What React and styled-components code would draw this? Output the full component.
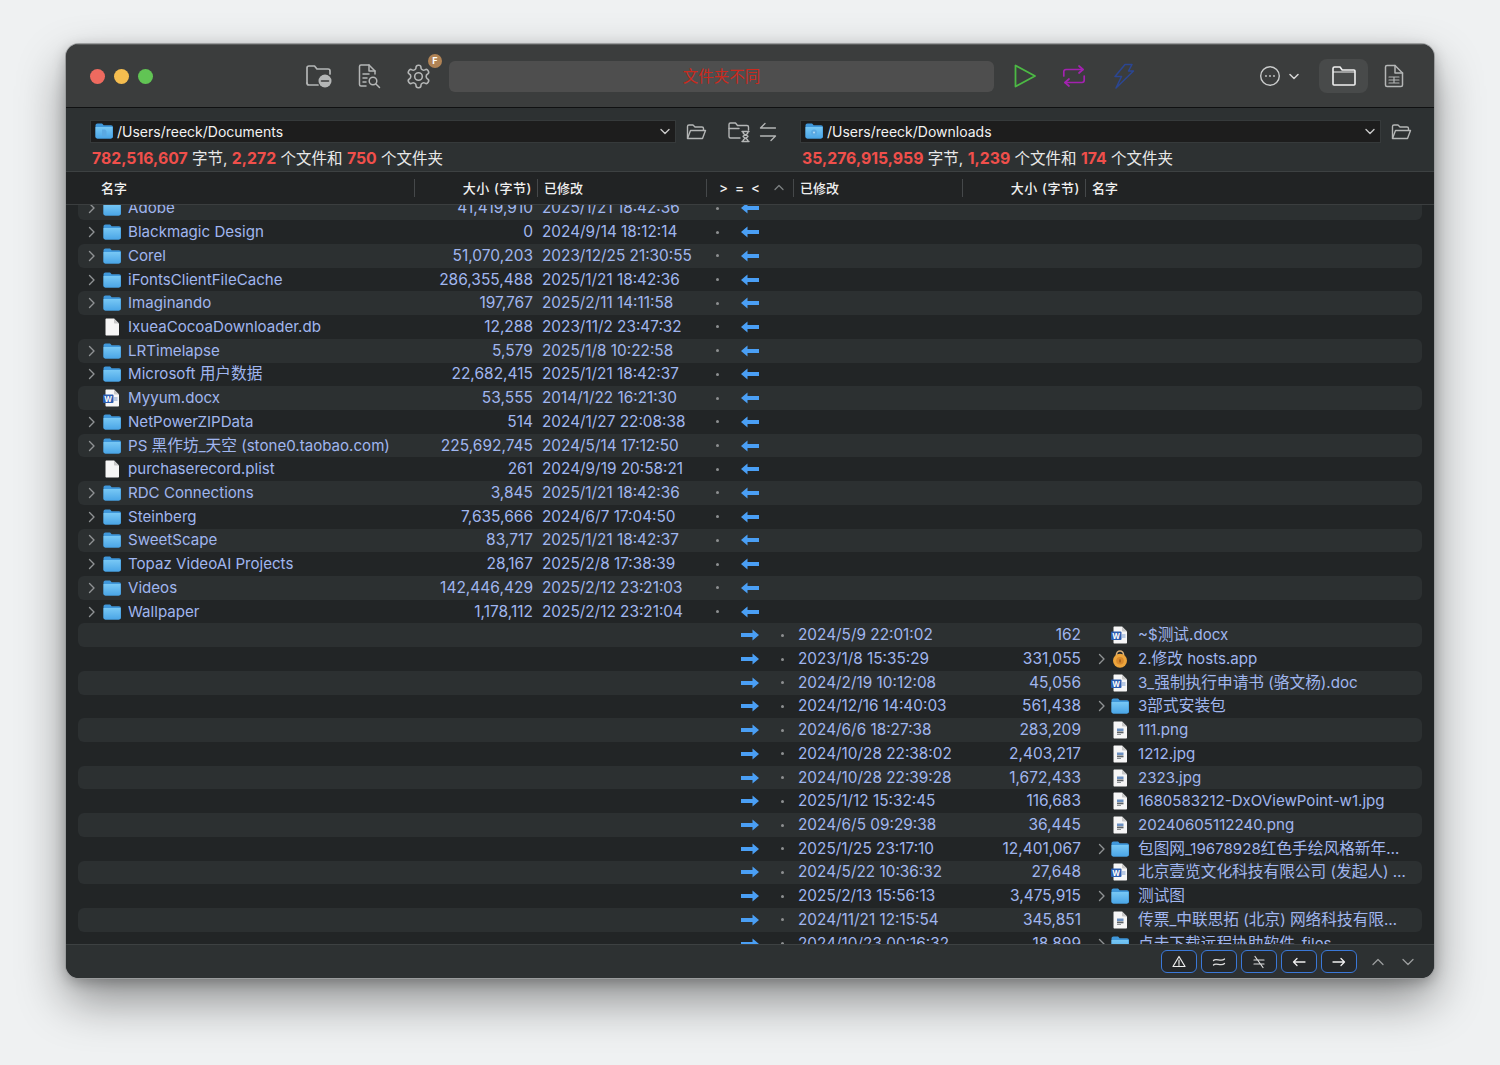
import React from "react";
import styled, { createGlobalStyle } from "styled-components";

const FONT = `Inter, "Noto Sans CJK SC", sans-serif`;

const Global = createGlobalStyle`
  html, body { margin: 0; padding: 0; background: #eff1f2; }
  * { box-sizing: border-box; }
`;

const leftRows = [
  ["Adobe", "41,419,910", "2025/1/21 18:42:36", "folder"],
  ["Blackmagic Design", "0", "2024/9/14 18:12:14", "folder"],
  ["Corel", "51,070,203", "2023/12/25 21:30:55", "folder"],
  ["iFontsClientFileCache", "286,355,488", "2025/1/21 18:42:36", "folder"],
  ["Imaginando", "197,767", "2025/2/11 14:11:58", "folder"],
  ["IxueaCocoaDownloader.db", "12,288", "2023/11/2 23:47:32", "file"],
  ["LRTimelapse", "5,579", "2025/1/8 10:22:58", "folder"],
  ["Microsoft 用户数据", "22,682,415", "2025/1/21 18:42:37", "folder"],
  ["Myyum.docx", "53,555", "2014/1/22 16:21:30", "word"],
  ["NetPowerZIPData", "514", "2024/1/27 22:08:38", "folder"],
  ["PS 黑作坊_天空 (stone0.taobao.com)", "225,692,745", "2024/5/14 17:12:50", "folder"],
  ["purchaserecord.plist", "261", "2024/9/19 20:58:21", "file"],
  ["RDC Connections", "3,845", "2025/1/21 18:42:36", "folder"],
  ["Steinberg", "7,635,666", "2024/6/7 17:04:50", "folder"],
  ["SweetScape", "83,717", "2025/1/21 18:42:37", "folder"],
  ["Topaz VideoAI Projects", "28,167", "2025/2/8 17:38:39", "folder"],
  ["Videos", "142,446,429", "2025/2/12 23:21:03", "folder"],
  ["Wallpaper", "1,178,112", "2025/2/12 23:21:04", "folder"],
];

const rightRows = [
  ["~$测试.docx", "162", "2024/5/9 22:01:02", "word"],
  ["2.修改 hosts.app", "331,055", "2023/1/8 15:35:29", "app"],
  ["3_强制执行申请书 (骆文杨).doc", "45,056", "2024/2/19 10:12:08", "word"],
  ["3部式安装包", "561,438", "2024/12/16 14:40:03", "folder"],
  ["111.png", "283,209", "2024/6/6 18:27:38", "image"],
  ["1212.jpg", "2,403,217", "2024/10/28 22:38:02", "image"],
  ["2323.jpg", "1,672,433", "2024/10/28 22:39:28", "image"],
  ["1680583212-DxOViewPoint-w1.jpg", "116,683", "2025/1/12 15:32:45", "image"],
  ["20240605112240.png", "36,445", "2024/6/5 09:29:38", "image"],
  ["包图网_19678928红色手绘风格新年…", "12,401,067", "2025/1/25 23:17:10", "folder"],
  ["北京壹览文化科技有限公司 (发起人) …", "27,648", "2024/5/22 10:36:32", "word"],
  ["测试图", "3,475,915", "2025/2/13 15:56:13", "folder"],
  ["传票_中联思拓 (北京) 网络科技有限…", "345,851", "2024/11/21 12:15:54", "image"],
  ["点击下载远程协助软件_files", "18,899", "2024/10/23 00:16:32", "folder"],
];

const Page = styled.div`
  width: 1500px;
  height: 1065px;
  padding: 44px 66px 0;
  background: #eff1f2;
  overflow: hidden;
  font-family: ${FONT};
`;

const Window = styled.div`
  width: 1368px;
  height: 934px;
  border-radius: 13px;
  overflow: hidden;
  display: flex;
  flex-direction: column;
  background: #2d3132;
  box-shadow: 0 0 0 1px #9a9c9d, 0 22px 48px rgba(0, 0, 0, 0.42), 0 4px 14px rgba(0, 0, 0, 0.25);
`;

const TitleBar = styled.div`
  height: 64px;
  flex: none;
  display: flex;
  align-items: center;
  background: #3b3d3d;
  border-bottom: 1px solid #101112;
  border-top: 1px solid #5a5c5c;
`;

const Light = styled.span`
  width: 15px;
  height: 15px;
  border-radius: 50%;
  background: ${(p) => p.$color};
  margin-left: ${(p) => p.$left}px;
`;

const ToolSlot = styled.div`
  flex: none;
  width: ${(p) => p.$width}px;
  margin-left: ${(p) => p.$left || 0}px;
  height: 34px;
  position: relative;
  display: flex;
  align-items: center;
  justify-content: center;
  border-radius: 8px;
  background: ${(p) => (p.$active ? "#484a4a" : "transparent")};
`;

const Badge = styled.span`
  position: absolute;
  top: -5px;
  right: -7px;
  width: 14px;
  height: 14px;
  border-radius: 50%;
  background: #b08355;
  color: #fff;
  font: 700 9px/14px ${FONT};
  text-align: center;
`;

const Status = styled.div`
  width: 545px;
  height: 31px;
  margin-left: 14px;
  flex: none;
  border-radius: 6px;
  background: #4e4e4e;
  color: #c92a1e;
  font-size: 15.5px;
  line-height: 31px;
  text-align: center;
`;

const PathArea = styled.div`
  height: 64px;
  flex: none;
  padding: 12px 0 0 24px;
  display: grid;
  grid-template-columns: 586px 40px 43px 41px 581px 1fr;
  grid-template-rows: 23px 28px;
  align-items: center;
  background: #2d3132;
  border-bottom: 1px solid #3d4142;
`;

const PathBox = styled.div`
  height: 23px;
  display: flex;
  align-items: center;
  padding: 0 5px 1px 4px;
  background: #1d1d1d;
  border: 1px solid #363a3b;
  color: #f2f2f2;
  font-size: 14px;
`;

const PathText = styled.span`
  flex: 1;
  margin-left: 4px;
`;

const IconCell = styled.div`
  display: flex;
  justify-content: ${(p) => (p.$start ? "flex-start" : "center")};
  padding-left: ${(p) => p.$pad || 0}px;
  align-items: center;
`;

const Stats = styled.div`
  grid-column: ${(p) => p.$col};
  padding-left: 2px;
  color: #e8e8e8;
  font-size: 15.5px;
  white-space: nowrap;
  b {
    color: #f04f4b;
    font-weight: 700;
    font-size: 15.8px;
  }
`;

const Head = styled.div`
  height: 33px;
  flex: none;
  display: grid;
  grid-template-columns: 348px 123px 169px 87px 169px 123px 1fr;
  align-items: center;
  padding-bottom: 1px;
  background: #212324;
  border-bottom: 1px solid #3b3e3f;
  color: #f0f0f0;
  font-size: 13px;
  font-weight: 500;
`;

const HeadCell = styled.div`
  height: 18px;
  display: flex;
  align-items: center;
  justify-content: ${(p) => (p.$end ? "flex-end" : "flex-start")};
  padding: ${(p) => (p.$end ? "0 5px 0 0" : `0 0 0 ${p.$pad || 6}px`)};
  border-left: ${(p) => (p.$first ? "0" : "1px solid #45484a")};
  letter-spacing: ${(p) => (p.$end ? "0.6px" : "0")};
  white-space: nowrap;
`;

const Compare = styled.span`
  letter-spacing: 7px;
  flex: 1;
  font-size: 13.5px;
`;

const List = styled.div`
  flex: 1;
  min-height: 0;
  overflow: hidden;
  padding: 0 12px;
  background: #222526;
`;

const Rows = styled.div`
  margin-top: -8.5px;
`;

const Row = styled.div`
  height: 23.72px;
  display: grid;
  grid-template-columns: 24px 24px 302px 103px 177px 14px 51px 14px 207px 85px 31px 26px 284px;
  padding-left: 2px;
  align-items: center;
  border-radius: 6px;
  background: ${(p) => (p.$striped ? "#2c3031" : "transparent")};
  color: #a0b6ef;
  font-size: 15.5px;
  line-height: 20px;
  white-space: nowrap;
`;

const Chev = styled.div`
  display: flex;
  justify-content: ${(p) => (p.$end ? "flex-end" : "center")};
  padding-right: ${(p) => (p.$end ? "6px" : "0")};
`;

const IconSlot = styled.div`
  display: flex;
  margin-left: ${(p) => p.$shift}px;
`;

const Name = styled.div`
  overflow: hidden;
  text-overflow: ellipsis;
  font-size: 15.1px;
  padding-right: ${(p) => (p.$right ? "10px" : "0")};
`;

const Cjk = styled.span`
  font-size: 15.7px;
`;

const Size = styled.div`
  text-align: right;
`;

const DateCell = styled.div`
  padding-left: 9px;
  font-size: 15.35px;
`;

const Dot = styled.div`
  width: 3px;
  height: 3px;
  border-radius: 50%;
  background: #8d8f90;
  justify-self: center;
`;

const ArrowCell = styled.div`
  display: flex;
  justify-content: center;
`;

const Foot = styled.div`
  height: 34px;
  flex: none;
  display: flex;
  align-items: center;
  justify-content: flex-end;
  padding-right: 20px;
  background: #2d3132;
  border-top: 1px solid #3d4142;
`;

const FootButton = styled.div`
  width: 36px;
  height: 23px;
  margin-left: 4px;
  display: flex;
  align-items: center;
  justify-content: center;
  border: 1.5px solid #3a78d8;
  border-radius: 6px;
  background: #25282a;
`;

const FootArrow = styled.div`
  margin-left: ${(p) => p.$left}px;
  display: flex;
`;

// CJK runs are a touch larger than the latin text around them
const splitName = (name) =>
  name.split(/([\u4e00-\u9fff]+)/).map((part, i) => (i % 2 ? <Cjk key={i}>{part}</Cjk> : part));

const FolderIcon = ({ glyph }) => (
  <svg width="18" height="16" viewBox="0 0 18 16">
    <defs>
      <linearGradient id="fg" x1="0" y1="0" x2="0" y2="1">
        <stop offset="0" stopColor="#78c8f5" />
        <stop offset="1" stopColor="#4aa5e6" />
      </linearGradient>
    </defs>
    <path d="M.5 2.500C.5 1.300 1.300.5 2.500.5h3.900c.8 0 1.100.3 1.600 1l.6.8h7.400c1.200 0 2 .8 2 2V13.500c0 1.200-.8 2-2 2H2.500c-1.200 0-2-.8-2-2z" fill="#3f97da" />
    <path d="M.5 4h17v9.500c0 1.200-.8 2-2 2H2.500c-1.200 0-2-.8-2-2z" fill="url(#fg)" />
    {glyph === "doc" && <path d="M7 6.500h3l1.500 1.500V13H7z" fill="#5aa9e2" />}
    {glyph === "disc" && (
      <>
        <circle cx="9" cy="9.500" r="3" fill="#5aa9e2" />
        <circle cx="9" cy="9.500" r="1" fill="#b5dcf6" />
      </>
    )}
  </svg>
);

const PaperShape = () => (
  <>
    <path d="M2.500 1.500C2.500.9 2.900.5 3.500.5h7.500L16 5.500V16.500c0 .6-.4 1-1 1H3.500c-.6 0-1-.4-1-1z" fill="#f6f6f6" />
    <path d="M11 .5V4.500c0 .6.4 1 1 1H16z" fill="#c9c9c9" />
  </>
);

const FileIcon = () => (
  <svg width="18" height="18" viewBox="0 0 18 18">
    <PaperShape />
  </svg>
);

const WordIcon = () => (
  <svg width="18" height="18" viewBox="0 0 18 18">
    <PaperShape />
    <rect x="11" y="8.500" width="3.500" height="1" fill="#7b9bd0" />
    <rect x="11" y="10.500" width="3.500" height="1" fill="#7b9bd0" />
    <rect x="0" y="5.500" width="10.500" height="8.500" rx="1" fill="#2a5cb0" />
    <text x="5.200" y="12.500" fontSize="7.500" fontWeight="700" fill="#fff" textAnchor="middle" fontFamily="Inter, sans-serif">W</text>
  </svg>
);

const ImageIcon = () => (
  <svg width="18" height="18" viewBox="0 0 18 18">
    <PaperShape />
    <rect x="6" y="7.500" width="6.500" height="2.500" fill="#6b8fc0" />
    <rect x="6" y="10.500" width="6.500" height="1.800" fill="#5d6265" />
    <rect x="6" y="13" width="4" height="1" fill="#8d9296" />
  </svg>
);

const AppIcon = () => (
  <svg width="18" height="18" viewBox="0 0 18 18">
    <path d="M5.500 6.500V4.500a3.500 3.500 0 0 1 7 0v2" fill="none" stroke="#d9b07a" strokeWidth="1.600" />
    <circle cx="9" cy="10.800" r="7" fill="#eda53c" />
    <circle cx="9" cy="10.800" r="3.800" fill="#d98a2c" />
    <rect x="8.400" y="9.400" width="1.200" height="3" fill="#8d5218" />
  </svg>
);

const KindIcon = ({ kind }) => {
  if (kind === "folder") return <FolderIcon />;
  if (kind === "word") return <WordIcon />;
  if (kind === "image") return <ImageIcon />;
  if (kind === "app") return <AppIcon />;
  return <FileIcon />;
};

const Chevron = () => (
  <svg width="8" height="12" viewBox="0 0 8 12">
    <path d="M1.500 1.500 6 6l-4.500 4.500" fill="none" stroke="#8f9294" strokeWidth="1.400" strokeLinecap="round" strokeLinejoin="round" />
  </svg>
);

const Arrow = ({ left }) => (
  <svg width="18" height="12" viewBox="0 0 18 12">
    <path d={left ? "M0 6l6.500-5.500V4H18v4H6.500v3.500z" : "M18 6l-6.500-5.500V4H0v4h11.500v3.500z"} fill="#4a9ff5" />
  </svg>
);

const stroke = { fill: "none", stroke: "#b4b6b6", strokeWidth: 1.7, strokeLinecap: "round", strokeLinejoin: "round" };

const OpenFolder = () => (
  <svg width="22" height="18" viewBox="0 0 22 18" {...stroke} strokeWidth="1.400">
    <path d="M2.500 15V3.500C2.500 2.600 3 2 4 2h4l2 2h7c1 0 1.500.6 1.500 1.500V7" />
    <path d="M2.500 15.500 5.500 7.500h15l-3 8z" />
  </svg>
);

const ComboArrow = () => (
  <svg width="10" height="7" viewBox="0 0 10 7" fill="none" stroke="#c8c8c8" strokeWidth="1.400" strokeLinecap="round" strokeLinejoin="round">
    <path d="M1 1.500 5 5.500l4-4" />
  </svg>
);

const App = () => (
  <Page>
    <Global />
    <Window>
      <TitleBar>
        <Light $color="#ee6a5f" $left={24} />
        <Light $color="#f5bd4f" $left={9} />
        <Light $color="#61c454" $left={9} />
        <ToolSlot $width={34} $left={149}>
          <svg width="28" height="26" viewBox="0 0 28 26" {...stroke}>
            <path d="M2 20V5c0-1.200.8-2 2-2h5.500l2.500 3h11c1.200 0 2 .8 2 2v3" />
            <path d="M2 20c0 1.200.8 2 2 2h9" />
            <circle cx="20" cy="18" r="6.500" fill="#b4b6b6" stroke="none" />
            <path d="M16.500 18h7" stroke="#3b3d3d" strokeWidth="1.600" />
          </svg>
        </ToolSlot>
        <ToolSlot $width={34} $left={16}>
          <svg width="26" height="26" viewBox="0 0 26 26" {...stroke} strokeWidth="1.500">
            <path d="M10 23H5c-1 0-1.500-.6-1.500-1.500V3.500C3.500 2.600 4 2 5 2h8l6 6v3" />
            <path d="M13 2v6h6" />
            <path d="M7 11h6M7 15h4M7 19h3" />
            <circle cx="17" cy="18" r="3.800" />
            <path d="M20 21l3.500 3.500" />
          </svg>
        </ToolSlot>
        <ToolSlot $width={34} $left={15}>
          <svg width="27" height="27" viewBox="0 0 24 24" {...stroke} strokeWidth="1.400">
            <path d="M12.200 2h-.44a2 2 0 0 0-2 2v.18a2 2 0 0 1-1 1.730l-.43.25a2 2 0 0 1-2 0l-.15-.08a2 2 0 0 0-2.730.73l-.22.38a2 2 0 0 0 .73 2.730l.15.1a2 2 0 0 1 1 1.720v.51a2 2 0 0 1-1 1.740l-.15.09a2 2 0 0 0-.73 2.730l.22.38a2 2 0 0 0 2.730.73l.15-.08a2 2 0 0 1 2 0l.43.25a2 2 0 0 1 1 1.730V20a2 2 0 0 0 2 2h.44a2 2 0 0 0 2-2v-.18a2 2 0 0 1 1-1.730l.43-.25a2 2 0 0 1 2 0l.15.08a2 2 0 0 0 2.730-.73l.22-.39a2 2 0 0 0-.73-2.730l-.15-.08a2 2 0 0 1-1-1.740v-.5a2 2 0 0 1 1-1.740l.15-.09a2 2 0 0 0 .73-2.730l-.22-.38a2 2 0 0 0-2.730-.73l-.15.08a2 2 0 0 1-2 0l-.43-.25a2 2 0 0 1-1-1.730V4a2 2 0 0 0-2-2z" />
            <circle cx="12" cy="12" r="3.400" />
          </svg>
          <Badge>F</Badge>
        </ToolSlot>
        <Status>文件夹不同</Status>
        <ToolSlot $width={30} $left={16}>
          <svg width="24" height="26" viewBox="0 0 24 26" fill="none" stroke="#4cb944" strokeWidth="1.800" strokeLinejoin="round">
            <path d="M2.500 2.500v21L22 13z" />
          </svg>
        </ToolSlot>
        <ToolSlot $width={30} $left={19}>
          <svg width="26" height="26" viewBox="0 0 26 26" fill="none" stroke="#a322b0" strokeWidth="1.700" strokeLinecap="round" strokeLinejoin="round">
            <path d="M18 3l4 3.500-4 3.500" />
            <path d="M22 6.500H5c-1.400 0-2.200.8-2.200 2.200V13" />
            <path d="M8 23l-4-3.500L8 16" />
            <path d="M4 19.500h17c1.400 0 2.200-.8 2.200-2.200V13" />
          </svg>
        </ToolSlot>
        <ToolSlot $width={30} $left={20}>
          <svg width="22" height="26" viewBox="0 0 22 26" fill="none" stroke="#2b4692" strokeWidth="1.500" strokeLinejoin="round">
            <path d="M12 1.500H19l-3.500 6.500h5L3 25l5.500-11.500H2z" />
          </svg>
        </ToolSlot>
        <ToolSlot $width={22} $left={120}>
          <svg width="22" height="22" viewBox="0 0 22 22" fill="none" stroke="#c9cbcb" strokeWidth="1.400">
            <circle cx="11" cy="11" r="9.300" />
            <circle cx="7" cy="11" r="0.9" fill="#c9cbcb" stroke="none" />
            <circle cx="11" cy="11" r="0.9" fill="#c9cbcb" stroke="none" />
            <circle cx="15" cy="11" r="0.9" fill="#c9cbcb" stroke="none" />
          </svg>
        </ToolSlot>
        <ToolSlot $width={12} $left={7}>
          <svg width="10" height="7" viewBox="0 0 10 7" fill="none" stroke="#d5d5d5" strokeWidth="1.500" strokeLinecap="round" strokeLinejoin="round">
            <path d="M1 1.500 5 5.500l4-4" />
          </svg>
        </ToolSlot>
        <ToolSlot $width={49} $left={19} $active>
          <svg width="26" height="22" viewBox="0 0 26 22" fill="none" stroke="#f0f0f0" strokeWidth="1.600" strokeLinejoin="round">
            <path d="M2 19V3.500C2 2.600 2.600 2 3.500 2H9l2.200 3H23c.6 0 1 .4 1 1v13c0 .6-.4 1-1 1H3c-.6 0-1-.4-1-1z" />
            <path d="M2 7h22" strokeWidth="1.200" />
          </svg>
        </ToolSlot>
        <ToolSlot $width={24} $left={14}>
          <svg width="20" height="24" viewBox="0 0 20 24" {...stroke} strokeWidth="1.500">
            <path d="M3 22.500c-1 0-1.500-.6-1.500-1.500V3c0-1 .5-1.500 1.500-1.500h8L18.500 9v12c0 1-.5 1.500-1.500 1.500z" />
            <path d="M11 1.500V9h7.500" />
            <path d="M5 13h10M5 16h10M5 19h10M10 13v6" strokeWidth="1.200" />
          </svg>
        </ToolSlot>
      </TitleBar>

      <PathArea>
        <PathBox>
          <FolderIcon glyph="doc" />
          <PathText>/Users/reeck/Documents</PathText>
          <ComboArrow />
        </PathBox>
        <IconCell><OpenFolder /></IconCell>
        <IconCell $pad={3}>
          <svg width="24" height="22" viewBox="0 0 24 22" {...stroke} strokeWidth="1.400">
            <path d="M13 17H3.500C2.600 17 2 16.400 2 15.500V3.500C2 2.600 2.600 2 3.500 2h5l2 2.500h9.500c.9 0 1.500.6 1.500 1.500v3" />
            <path d="M2 7.500h10" />
            <path d="M15 10.500h7M15 20.500h7M16 11c0 3 5 3.500 5 4.500s-5 1.500-5 4.500M21 11c0 3-5 3.500-5 4.500s5 1.500 5 4.500" />
          </svg>
        </IconCell>
        <IconCell $start>
          <svg width="18" height="20" viewBox="0 0 18 20" {...stroke} strokeWidth="1.300">
            <path d="M6 1.500 1.500 6H16.500M12 18.500 16.500 14H1.500" />
          </svg>
        </IconCell>
        <PathBox>
          <FolderIcon glyph="disc" />
          <PathText>/Users/reeck/Downloads</PathText>
          <ComboArrow />
        </PathBox>
        <IconCell $start $pad={9}><OpenFolder /></IconCell>
        <Stats $col="1 / 5">
          <b>782,516,607</b> 字节, <b>2,272</b> 个文件和 <b>750</b> 个文件夹
        </Stats>
        <Stats $col="5 / 7">
          <b>35,276,915,959</b> 字节, <b>1,239</b> 个文件和 <b>174</b> 个文件夹
        </Stats>
      </PathArea>

      <Head>
        <HeadCell $first $pad={35}>名字</HeadCell>
        <HeadCell $end>大小 (字节)</HeadCell>
        <HeadCell>已修改</HeadCell>
        <HeadCell $pad={12}>
          <Compare>&gt;=&lt;</Compare>
          <svg width="10" height="7" viewBox="0 0 10 7" fill="none" stroke="#7d8082" strokeWidth="1.300" strokeLinecap="round" strokeLinejoin="round" style={{ marginRight: 9 }}>
            <path d="M1 5.500 5 1.500l4 4" />
          </svg>
        </HeadCell>
        <HeadCell>已修改</HeadCell>
        <HeadCell $end>大小 (字节)</HeadCell>
        <HeadCell>名字</HeadCell>
      </Head>

      <List>
        <Rows>
          {leftRows.map(([name, size, date, kind], i) => (
            <Row key={name} $striped={i % 2 === 0}>
              <Chev>{kind === "folder" && <Chevron />}</Chev>
              <IconSlot $shift={-1}><KindIcon kind={kind} /></IconSlot>
              <Name>{splitName(name)}</Name>
              <Size>{size}</Size>
              <DateCell>{date}</DateCell>
              <Dot />
              <ArrowCell><Arrow left /></ArrowCell>
            </Row>
          ))}
          {rightRows.map(([name, size, date, kind], i) => (
            <Row key={name} $striped={i % 2 === 0}>
              <span />
              <span />
              <span />
              <span />
              <span />
              <span />
              <ArrowCell><Arrow /></ArrowCell>
              <Dot />
              <DateCell>{date}</DateCell>
              <Size>{size}</Size>
              <Chev $end>{(kind === "folder" || kind === "app") && <Chevron />}</Chev>
              <IconSlot $shift={-1}><KindIcon kind={kind} /></IconSlot>
              <Name $right>{splitName(name)}</Name>
            </Row>
          ))}
        </Rows>
      </List>

      <Foot>
        <FootButton>
          <svg width="14" height="13" viewBox="0 0 14 13" fill="none" stroke="#eee" strokeWidth="1.200" strokeLinejoin="round">
            <path d="M7 1.500 13 11.500H1z" />
            <path d="M7 5v3.500M7 9.500v.8" strokeLinecap="round" />
          </svg>
        </FootButton>
        <FootButton>
          <svg width="14" height="10" viewBox="0 0 14 10" fill="none" stroke="#ddd" strokeWidth="1.300" strokeLinecap="round">
            <path d="M1.500 3.500C4 .5 9 5.500 12.500 2M1.500 8C4 5 9 10 12.500 6.500" />
          </svg>
        </FootButton>
        <FootButton>
          <svg width="14" height="14" viewBox="0 0 14 14" fill="none" stroke="#ddd" strokeWidth="1.200" strokeLinecap="round">
            <path d="M2 5h10M2 9h10M3 1.500l8 11" />
          </svg>
        </FootButton>
        <FootButton>
          <svg width="14" height="10" viewBox="0 0 14 10" fill="none" stroke="#eee" strokeWidth="1.300" strokeLinecap="round" strokeLinejoin="round">
            <path d="M13 5H1.500M5 1.500 1.500 5 5 8.500" />
          </svg>
        </FootButton>
        <FootButton>
          <svg width="14" height="10" viewBox="0 0 14 10" fill="none" stroke="#eee" strokeWidth="1.300" strokeLinecap="round" strokeLinejoin="round">
            <path d="M1 5h11.500M9 1.500 12.500 5 9 8.500" />
          </svg>
        </FootButton>
        <FootArrow $left={15}>
          <svg width="12" height="8" viewBox="0 0 12 8" fill="none" stroke="#9a9c9d" strokeWidth="1.300" strokeLinecap="round" strokeLinejoin="round">
            <path d="M1 6.500 6 1.500l5 5" />
          </svg>
        </FootArrow>
        <FootArrow $left={18}>
          <svg width="12" height="8" viewBox="0 0 12 8" fill="none" stroke="#9a9c9d" strokeWidth="1.300" strokeLinecap="round" strokeLinejoin="round">
            <path d="M1 1.500 6 6.500l5-5" />
          </svg>
        </FootArrow>
      </Foot>
    </Window>
  </Page>
);

export default App;
